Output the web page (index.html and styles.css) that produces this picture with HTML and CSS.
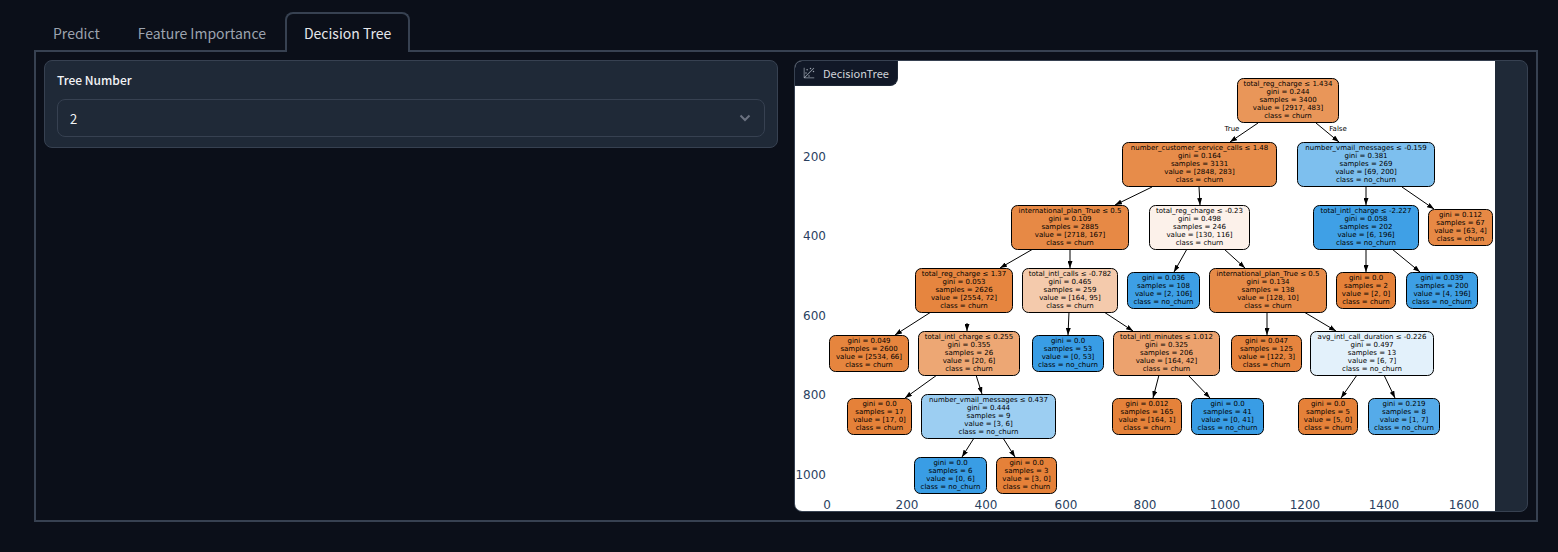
FILE: index.html
```html
<!DOCTYPE html>
<html lang="en">
<head>
<meta charset="utf-8">
<title>Decision Tree</title>
<link rel="stylesheet" href="styles.css">
</head>
<body>
<main class="app">
  <div class="tabs" role="tablist">
    <button class="tab" type="button" role="tab" aria-selected="false">Predict</button>
    <button class="tab" type="button" role="tab" aria-selected="false">Feature Importance</button>
    <button class="tab tab-active" type="button" role="tab" aria-selected="true">Decision Tree</button>
  </div>
  <section class="tab-panel" role="tabpanel">
    <div class="block form">
      <label class="form-label" for="tree-number">Tree Number</label>
      <div class="select-wrap">
        <select class="select" id="tree-number">
          <option>0</option>
          <option>1</option>
          <option selected>2</option>
        </select>
        <svg class="chevron" viewBox="0 0 12 8" aria-hidden="true"><path d="M1.500 1.500L6 6L10.500 1.500"/></svg>
      </div>
    </div>
    <div class="block plot">
      <div class="plot-label">
        <svg class="plot-icon" viewBox="0 0 32 32" aria-hidden="true">
          <circle cx="20" cy="4" r="2"/><circle cx="8" cy="16" r="2"/><circle cx="28" cy="12" r="2"/><circle cx="11" cy="7" r="2"/><circle cx="16" cy="24" r="2"/>
          <path d="M30 3.413L28.586 2L4 26.585V2H2v26a2 2 0 0 0 2 2h26v-2H5.413Z"/>
        </svg>
        <span>DecisionTree</span>
      </div>
      <svg class="chart" id="chart" viewBox="795 61 700 450" role="img" aria-label="Decision tree">
        <defs>
          <marker id="arrow" viewBox="0 0 7 5" refX="7" refY="2.500" markerWidth="7" markerHeight="5" markerUnits="userSpaceOnUse" orient="auto"><path d="M0 0L7 2.500L0 5Z"/></marker>
        </defs>
      </svg>
    </div>
  </section>
</main>
<script src="tree.js"></script>
</body>
</html>
```

FILE: styles.css
```css
* {
  box-sizing: border-box;
}

body {
  margin: 0;
  background: #0b0f19;
  color: #f3f4f6;
  font-family: "Noto Sans CJK SC", "Noto Sans", sans-serif;
}

.app {
  padding: 12px 20px 30px 34px;
}

.tabs {
  display: flex;
  position: relative;
  margin-bottom: -2px;
}

.tab {
  height: 40px;
  padding: 0 17px;
  border: 2px solid transparent;
  border-bottom: 0;
  border-radius: 8px 8px 0 0;
  background: transparent;
  color: #9ca3af;
  font-family: inherit;
  font-size: 14px;
  line-height: 24px;
  white-space: nowrap;
}

.tab-active {
  border-color: #374151;
  background: #0b0f19;
  color: #e5e7eb;
}

.tab-panel {
  display: grid;
  grid-template-columns: 1fr 1fr;
  align-items: start;
  gap: 16px;
  padding: 8px;
  border: 2px solid #374151;
}

.block {
  min-width: 0;
  border: 1px solid #374151;
  border-radius: 8px;
  background: #1f2937;
  overflow: hidden;
}

.form {
  padding: 9px 12px 10px;
}

.form-label {
  display: block;
  margin-bottom: 9px;
  font-size: 12px;
  font-weight: 500;
  line-height: 20px;
}

.select-wrap {
  display: grid;
  align-items: center;
}

.select,
.chevron {
  grid-area: 1 / 1;
}

.select {
  width: 100%;
  height: 38px;
  padding: 0 12px;
  border: 1px solid #374151;
  border-radius: 8px;
  appearance: none;
  background: #1f2937;
  color: #f3f4f6;
  font-family: inherit;
  font-size: 13px;
}

.chevron {
  justify-self: end;
  width: 12px;
  height: 8px;
  margin-right: 14px;
  fill: none;
  stroke: #6b7280;
  stroke-width: 2;
  pointer-events: none;
}

.plot {
  position: relative;
}

.plot-label {
  position: absolute;
  top: 0;
  left: 0;
  display: flex;
  align-items: center;
  gap: 8px;
  padding: 2px 8px;
  border: 1px solid #1f2937;
  border-top: 0;
  border-left: 0;
  border-radius: 0 0 8px 0;
  background: #111827;
  color: #d1d5db;
  font-size: 11px;
  line-height: 20px;
}

.plot-icon {
  width: 12px;
  height: 12px;
  fill: #9ca3af;
}

.chart {
  display: block;
  width: 700px;
  max-width: 100%;
  background: #ffffff;
}

.tick {
  fill: #2a3f5f;
  font-family: "DejaVu Sans", sans-serif;
  font-size: 12px;
}

.tick-y {
  text-anchor: end;
}

.tick-x,
.node-text {
  text-anchor: middle;
}

.node-text {
  fill: #000000;
  font-family: "DejaVu Sans", sans-serif;
  font-size: 7px;
}

.node-box,
.edge {
  stroke: #000000;
  stroke-width: 1;
}
```

FILE: tree.js
```js
const chart = document.getElementById("chart");

function add(name, attrs, text) {
  const el = document.createElementNS("http://www.w3.org/2000/svg", name);
  for (const key in attrs) el.setAttribute(key, attrs[key]);
  if (text) el.textContent = text;
  chart.appendChild(el);
}

// left, right, top, fill, test (empty for a leaf), gini, samples, value, class
const nodes = [
  [1237, 1339, 78, "#e99659", "total_reg_charge ≤ 1.434", "0.244", 3400, "2917, 483", "churn"],
  [1122, 1277, 142, "#e78c4a", "number_customer_service_calls ≤ 1.48", "0.164", 3131, "2848, 283", "churn"],
  [1297, 1435, 142, "#7dbfee", "number_vmail_messages ≤ -0.159", "0.381", 269, "69, 200", "no_churn"],
  [1011, 1129, 205, "#e78945", "international_plan_True ≤ 0.5", "0.109", 2885, "2718, 167", "churn"],
  [1149, 1250, 205, "#fcf1ea", "total_reg_charge ≤ -0.23", "0.498", 246, "130, 116", "churn"],
  [1313, 1419, 205, "#3fa0e6", "total_intl_charge ≤ -2.227", "0.058", 202, "6, 196", "no_churn"],
  [1428, 1493, 209, "#e78945", "", "0.112", 67, "63, 4", "churn"],
  [915, 1013, 268, "#e6853f", "total_reg_charge ≤ 1.37", "0.053", 2626, "2554, 72", "churn"],
  [1022, 1118, 268, "#f4caac", "total_intl_calls ≤ -0.782", "0.465", 259, "164, 95", "churn"],
  [1127, 1200, 272, "#3d9fe5", "", "0.036", 108, "2, 106", "no_churn"],
  [1209, 1327, 268, "#e78b48", "international_plan_True ≤ 0.5", "0.134", 138, "128, 10", "churn"],
  [1336, 1396, 272, "#e58139", "", "0.0", 2, "2, 0", "churn"],
  [1406, 1478, 272, "#3d9fe5", "", "0.039", 200, "4, 196", "no_churn"],
  [829, 909, 335, "#e6853e", "", "0.049", 2600, "2534, 66", "churn"],
  [918, 1020, 331, "#eda774", "total_intl_charge ≤ 0.255", "0.355", 26, "20, 6", "churn"],
  [1032, 1104, 335, "#399de5", "", "0.0", 53, "0, 53", "no_churn"],
  [1113, 1220, 331, "#eca26e", "total_intl_minutes ≤ 1.012", "0.325", 206, "164, 42", "churn"],
  [1231, 1302, 335, "#e6843e", "", "0.047", 125, "122, 3", "churn"],
  [1310, 1434, 331, "#e3f1fb", "avg_intl_call_duration ≤ -0.226", "0.497", 13, "6, 7", "no_churn"],
  [847, 912, 398, "#e58139", "", "0.0", 17, "17, 0", "churn"],
  [921, 1056, 394, "#9ccef2", "number_vmail_messages ≤ 0.437", "0.444", 9, "3, 6", "no_churn"],
  [1112, 1182, 398, "#e5823a", "", "0.012", 165, "164, 1", "churn"],
  [1191, 1264, 398, "#399de5", "", "0.0", 41, "0, 41", "no_churn"],
  [1298, 1358, 398, "#e58139", "", "0.0", 5, "5, 0", "churn"],
  [1368, 1440, 398, "#55abe9", "", "0.219", 8, "1, 7", "no_churn"],
  [914, 987, 457, "#399de5", "", "0.0", 6, "0, 6", "no_churn"],
  [996, 1057, 457, "#e58139", "", "0.0", 3, "3, 0", "churn"]
];

// start x, start y, tip x, tip y
const edges = [
  [1258, 123, 1230, 142], [1316, 123, 1339, 142],
  [1152, 187, 1115, 205], [1199, 187, 1200, 205], [1366, 187, 1366, 205], [1402, 187, 1434, 209],
  [1033, 249, 1000, 268], [1070, 249, 1070, 268], [1187, 249, 1174, 272],
  [1224, 249, 1245, 268], [1366, 249, 1366, 272], [1392, 249, 1420, 272],
  [931, 312, 895, 335], [967, 323, 967, 331], [1069, 312, 1068, 335],
  [1104, 312, 1133, 331], [1267, 312, 1267, 335], [1304, 312, 1336, 331],
  [937, 375, 905, 398], [976, 375, 982, 394], [1159, 375, 1153, 398],
  [1188, 375, 1210, 398], [1357, 375, 1341, 398], [1384, 375, 1395, 398],
  [974, 438, 962, 457], [1003, 438, 1015, 457]
];

edges.forEach(([x1, y1, x2, y2]) => {
  add("line", { x1, y1, x2, y2, class: "edge", "marker-end": "url(#arrow)" });
});

nodes.forEach(([left, right, top, fill, test, gini, samples, value, cls]) => {
  const lines = ["gini = " + gini, "samples = " + samples, "value = [" + value + "]", "class = " + cls];
  if (test) lines.unshift(test);
  add("rect", { x: left + 0.5, y: top + 0.5, width: right - left - 1, height: test ? 44 : 36, rx: 6, fill, class: "node-box" });
  lines.forEach((line, i) => {
    add("text", { x: (left + right) / 2, y: top + 8 + i * 8, class: "node-text" }, line);
  });
});

add("text", { x: 1232, y: 131, class: "node-text" }, "True");
add("text", { x: 1338, y: 131, class: "node-text" }, "False");

for (let i = 1; i <= 5; i++) {
  add("text", { x: 826, y: Math.round(81 + i * 79.6), class: "tick tick-y" }, String(i * 200));
}
for (let i = 0; i <= 8; i++) {
  add("text", { x: Math.round(827 + i * 79.6), y: 509, class: "tick tick-x" }, String(i * 200));
}
```
